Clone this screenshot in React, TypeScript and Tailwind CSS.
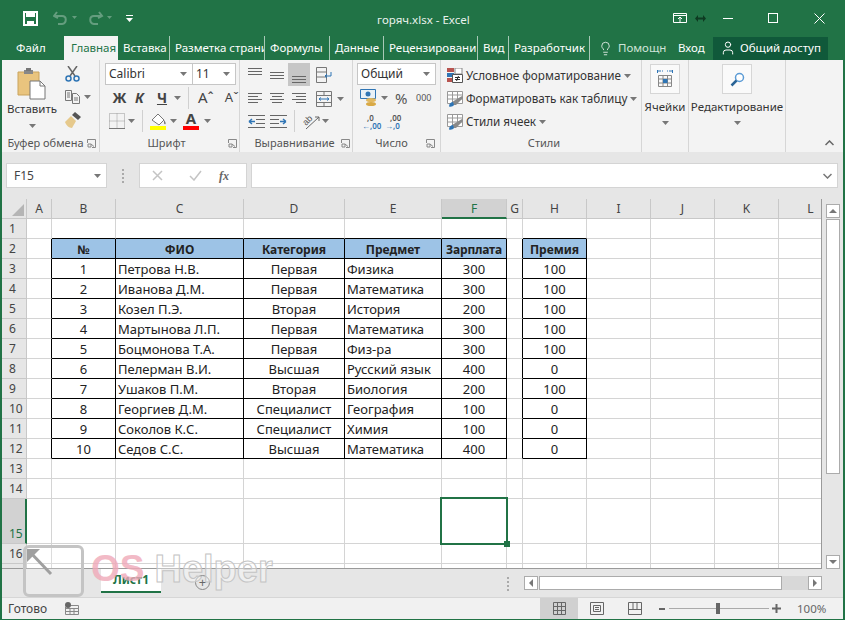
import React from 'react';
import { User, Lightbulb } from 'lucide-react';

const Caret = ({ className = '' }: { className?: string }) => (
  <svg width="7" height="4" viewBox="0 0 7 4" className={`shrink-0 ${className}`}>
    <path d="M0 0h7L3.500 4z" fill="#777" />
  </svg>
);

const Launcher = () => (
  <svg width="9" height="9" viewBox="0 0 9 9" className="shrink-0">
    <path d="M.5 4V.5H8.500V8.500H5M1 5h3v3H1zM4 5l3 2.500" fill="none" stroke="#888" />
  </svg>
);

const Sep = ({ h = 'h-[22px]' }: { h?: string }) => <div className={`w-px bg-[#d0d0d0] shrink-0 ${h}`} />;

// lines used by the alignment buttons
const Lines = ({ ys, xs, color = '#666' }: { ys: number[]; xs: [number, number][]; color?: string }) => (
  <svg width="16" height="16" viewBox="0 0 16 16" className="shrink-0">
    {ys.map((y, i) => (
      <path key={y} d={`M${xs[i % xs.length][0]} ${y + 0.5}H${xs[i % xs.length][1]}`} stroke={color} />
    ))}
  </svg>
);

const PasteIcon = () => (
  <svg width="30" height="32" viewBox="0 0 30 32">
    <path d="M1 4h21v23H1z" fill="#e9c47e" stroke="#c9a35c" />
    <path d="M7 2h9v4H7z" fill="#888" />
    <path d="M9 0h5v3H9z" fill="#777" />
    <path d="M13 13h10l5 5v13H13z" fill="#fff" stroke="#777" />
    <path d="M23 13v5h5" fill="none" stroke="#777" />
  </svg>
);

const CutIcon = () => (
  <svg width="15" height="16" viewBox="0 0 15 16" fill="none">
    <path d="M3 0l7 10M12 0L5 10" stroke="#666" strokeWidth="1.500" />
    <circle cx="3.500" cy="12.500" r="2.500" stroke="#2f75b5" strokeWidth="1.500" />
    <circle cx="11.500" cy="12.500" r="2.500" stroke="#2f75b5" strokeWidth="1.500" />
  </svg>
);

const CopyIcon = () => (
  <svg width="15" height="14" viewBox="0 0 15 14" fill="none" stroke="#777">
    <path d="M.5.500h6v10h-6zM2 3h3M2 5h3M2 7h3" />
    <path d="M7.500 3.500h4l3 3v7h-7z" fill="#f3f3f3" />
    <path d="M9 8h4M9 10h4" />
  </svg>
);

const BrushIcon = () => (
  <svg width="16" height="16" viewBox="0 0 16 16">
    <path d="M0 10l6-6 5 5-4 7c-3 0-6-3-7-6z" fill="#e6c98c" />
    <path d="M7 3l3-3 6 5-3 3z" fill="#555" />
  </svg>
);

const BordersIcon = () => (
  <svg width="16" height="16" viewBox="0 0 16 16" fill="none">
    <path d="M.5.500h15v15H.500z" stroke="#999" strokeDasharray="1 1" />
    <path d="M8 .5v15M.5 8h15" stroke="#999" strokeDasharray="1 1" />
    <path d="M0 15.500h16" stroke="#777" />
  </svg>
);

const FillIcon = () => (
  <svg width="18" height="18" viewBox="0 0 18 18">
    <path d="M2 8l6-6 6 6-5 5z" fill="#fff" stroke="#777" />
    <path d="M14 8c1.500 2 2 3 1.500 4-.7.500-1.500 0-1.500-1z" fill="#777" />
    <path d="M0 14h16v4H0z" fill="#ffff00" />
  </svg>
);

const WrapIcon = () => (
  <svg width="16" height="16" viewBox="0 0 16 16" fill="none" stroke="#777">
    <path d="M.5.500h10v15H.500zM.5 5h10M.5 10h10" />
    <path d="M15 5v4H9M11 7L9 9l2 2" stroke="#2f75b5" />
  </svg>
);

const MergeIcon = () => (
  <svg width="16" height="16" viewBox="0 0 16 16" fill="none" stroke="#777">
    <path d="M.5.500h15v15H.500zM.5 4.500h15M.5 11.500h15M8 .5v4M8 11.500v4" />
    <path d="M3 8h10M3 8l2-1.500M3 8l2 1.500M13 8l-2-1.500M13 8l-2 1.500" stroke="#2f75b5" />
  </svg>
);

const IndentIcon = ({ flip }: { flip?: boolean }) => (
  <svg width="17" height="13" viewBox="0 0 17 13" fill="none" className={flip ? '-scale-x-100' : ''}>
    <path d="M0 .5h17M8 4.500h9M8 8.500h9M0 12.500h17" stroke="#666" />
    <path d="M1 6.500h6M1 6.500l3-2.500M1 6.500L4 9" stroke="#2f75b5" strokeWidth="1.500" />
  </svg>
);

const OrientIcon = () => (
  <svg width="18" height="18" viewBox="0 0 18 18" fill="none">
    <text x="1" y="11" fontSize="9" fill="#555" transform="rotate(-45 6 9)" fontFamily="Liberation Sans, sans-serif">ab</text>
    <path d="M4 17L17 5M17 5h-4M17 5v4" stroke="#666" />
  </svg>
);

const AccountingIcon = () => (
  <svg width="17" height="18" viewBox="0 0 17 18">
    <path d="M.5.500h15v9H.500z" fill="#e9f1f7" stroke="#2f75b5" />
    <circle cx="8" cy="5" r="2.500" fill="#2f75b5" />
    <ellipse cx="11" cy="11" rx="5" ry="2" fill="#e2b85f" />
    <ellipse cx="11" cy="15" rx="5" ry="2" fill="#d9a945" />
  </svg>
);

const CondIcon = () => (
  <svg width="16" height="15" viewBox="0 0 16 15">
    <path d="M0 0h7v4H0z" fill="#b85450" />
    <path d="M0 5h7v4H0z" fill="#2f75b5" />
    <path d="M0 10h7v4H0z" fill="#b85450" />
    <path d="M8 0h7v6H8z" fill="#fff" stroke="#888" />
    <path d="M5.500 6.500h10v8h-10z" fill="#fff" stroke="#555" />
    <path d="M8 9.500h5M8 11.500h5M11.500 8l-2 5" stroke="#333" fill="none" />
  </svg>
);

const TableFmtIcon = () => (
  <svg width="16" height="16" viewBox="0 0 16 16">
    <path d="M.5.500h15v12H.500zM.5 4h15M.5 8h15M5.500.5v12M10.500.5v12" fill="#fff" stroke="#999" />
    <path d="M15 5l1 2-7 7H5v-3z" fill="#8a8a8a" />
    <path d="M2 15.500c0-3 2-4.500 4-4.500l1 3c-1 1.500-3 2-5 1.500z" fill="#2f75b5" />
  </svg>
);

const CellsIcon = () => (
  <svg width="16" height="18" viewBox="0 0 16 18" fill="none">
    <path d="M.5 1H4M12 1h3.500M.5 0v3M15.500 0v3M5 1l1 0M10 1h1" stroke="#2f75b5" />
    <path d="M1.500 5.500h13v11h-13zM1.500 9h13M1.500 13h13M6 5.500v11M10.500 5.500v11" stroke="#888" />
    <path d="M6 9h4.500v4H6z" fill="#2f75b5" />
  </svg>
);

const FindIcon = () => (
  <svg width="15" height="15" viewBox="0 0 15 15" fill="none">
    <circle cx="9.500" cy="5.500" r="4" stroke="#5b9bd5" strokeWidth="1.500" fill="#fff" />
    <path d="M6.500 8.500L1.500 13.500" stroke="#2a6496" strokeWidth="2.500" />
  </svg>
);

const GroupLabel = ({ text, launcher, w }: { text: string; launcher?: boolean; w: string }) => (
  <div className={`mt-auto h-[16px] flex items-center text-[11px] text-[#555] ${w}`}>
    <span className="flex-1 text-center whitespace-nowrap">{text}</span>
    {launcher && <Launcher />}
  </div>
);

const FieldBox = ({ text, className }: { text: string; className: string }) => (
  <div className={`h-[22px] bg-white border border-[#c6c6c6] flex items-center justify-between pl-[3px] pr-[5px] text-[12px] text-[#333] ${className}`}>
    <span>{text}</span>
    <Caret />
  </div>
);

const Ribbon = () => (
  <div className="h-[92px] bg-[#f3f3f3] flex text-[#333]">
    {/* Буфер обмена */}
    <div className="w-[98px] border-r border-[#d6d6d6] flex flex-col pt-[4px] pl-[2px] pr-[3px]">
      <div className="flex">
        <div className="w-[56px] flex flex-col items-center pt-[4px]">
          <PasteIcon />
          <span className="text-[11.5px] leading-[16px] mt-[1px]">Вставить</span>
          <Caret className="mt-[7px]" />
        </div>
        <div className="flex flex-col pl-[5px] gap-[8px] pt-[2px]">
          <CutIcon />
          <div className="flex items-center gap-[4px]"><CopyIcon /><Caret /></div>
          <BrushIcon />
        </div>
      </div>
      <GroupLabel text="Буфер обмена" launcher w="w-full pb-[1px]" />
    </div>

    {/* Шрифт */}
    <div className="w-[140px] border-r border-[#d6d6d6] flex flex-col pt-[3px] pl-[5px]">
      <div className="flex">
        <FieldBox text="Calibri" className="w-[88px]" />
        <FieldBox text="11" className="w-[43px] border-l-0" />
      </div>
      <div className="h-[23px] mt-[1px] flex items-center text-[#444]">
        <span className="ml-[7px] w-[15px] text-[14px] font-bold text-center">Ж</span>
        <span className="ml-[5px] w-[15px] text-[14px] font-bold italic text-center">К</span>
        <span className="ml-[9px] w-[12px] text-[14px] font-bold underline text-center">Ч</span>
        <Caret className="ml-[6px]" />
        <div className="ml-[7px]"><Sep /></div>
        <span className="ml-[9px] text-[15px]">Aˆ</span>
        <span className="ml-[11px] text-[13px]">Aˇ</span>
      </div>
      <div className="h-[24px] flex items-center">
        <div className="ml-[4px]"><BordersIcon /></div>
        <Caret className="ml-[3px]" />
        <div className="ml-[7px]"><Sep /></div>
        <div className="ml-[7px]"><FillIcon /></div>
        <Caret className="ml-[2px]" />
        <div className="ml-[6px] w-[16px] h-[20px] flex flex-col items-center">
          <span className="text-[15px] leading-[15px] font-bold text-[#444]">A</span>
          <div className="w-[16px] h-[4px] bg-[#ff0000]" />
        </div>
        <Caret className="ml-[5px]" />
      </div>
      <GroupLabel text="Шрифт" launcher w="w-[132px] pb-[1px]" />
    </div>

    {/* Выравнивание */}
    <div className="w-[113px] border-r border-[#d6d6d6] flex flex-col pt-[3px] pl-[8px]">
      <div className="h-[23px] flex items-center">
        <Lines ys={[1, 4, 7]} xs={[[0, 14], [0, 14], [0, 14]]} />
        <div className="ml-[6px]"><Lines ys={[5, 8, 11]} xs={[[0, 14], [0, 14], [0, 14]]} /></div>
        <div className="ml-[2px] w-[22px] h-[23px] bg-[#c6c6c6] flex items-center justify-center">
          <Lines ys={[9, 12, 15]} xs={[[1, 15], [1, 15], [1, 15]]} />
        </div>
        <div className="ml-[6px]"><WrapIcon /></div>
      </div>
      <div className="h-[23px] flex items-center mt-[1px]">
        <Lines ys={[2, 5, 8, 11]} xs={[[0, 14], [0, 10], [0, 14], [0, 10]]} />
        <div className="ml-[6px]"><Lines ys={[2, 5, 8, 11]} xs={[[0, 14], [2, 12], [0, 14], [2, 12]]} /></div>
        <div className="ml-[6px]"><Lines ys={[2, 5, 8, 11]} xs={[[0, 14], [4, 14], [0, 14], [4, 14]]} /></div>
        <div className="ml-[8px]"><MergeIcon /></div>
        <Caret className="ml-[5px]" />
      </div>
      <div className="h-[22px] flex items-center">
        <IndentIcon />
        <div className="ml-[5px]"><IndentIcon flip /></div>
        <div className="ml-[7px]"><Sep /></div>
        <div className="ml-[7px]"><OrientIcon /></div>
        <Caret className="ml-[2px]" />
      </div>
      <GroupLabel text="Выравнивание" launcher w="w-[102px] pb-[1px]" />
    </div>

    {/* Число */}
    <div className="w-[88px] border-r border-[#d6d6d6] flex flex-col pt-[3px] pl-[4px]">
      <FieldBox text="Общий" className="w-[79px]" />
      <div className="h-[24px] mt-[1px] flex items-center text-[#555]">
        <div className="ml-[3px]"><AccountingIcon /></div>
        <Caret className="ml-[4px]" />
        <span className="ml-[7px] w-[17px] text-[15px]">%</span>
        <span className="ml-[4px] text-[9px]">000</span>
      </div>
      <div className="h-[23px] flex items-center text-[8px] leading-[8px] text-[#555] font-semibold">
        <div className="ml-[5px] w-[15px]"><span className="block pl-[5px]">,0</span><span className="block text-[#2f75b5] whitespace-nowrap">←,00</span></div>
        <div className="ml-[8px] w-[15px]"><span className="block pl-[5px]">,00</span><span className="block text-[#2f75b5] whitespace-nowrap">→,0</span></div>
      </div>
      <GroupLabel text="Число" launcher w="w-[78px] pb-[1px]" />
    </div>

    {/* Стили */}
    <div className="w-[201px] border-r border-[#d6d6d6] flex flex-col pt-[4px] pl-[6px] text-[11.7px] whitespace-nowrap">
      <div className="h-[23px] flex items-center gap-[3px]"><CondIcon /><span>Условное форматирование</span><Caret /></div>
      <div className="h-[23px] flex items-center gap-[3px]"><TableFmtIcon /><span>Форматировать как таблицу</span><Caret /></div>
      <div className="h-[23px] flex items-center gap-[3px]"><TableFmtIcon /><span>Стили ячеек</span><Caret /></div>
      <GroupLabel text="Стили" w="w-full pb-[1px]" />
    </div>

    {/* Ячейки */}
    <div className="w-[47px] border-r border-[#d6d6d6] flex flex-col items-center pt-[4px] text-[11.5px]">
      <div className="w-[30px] h-[30px] bg-[#fafafa] border border-[#d6d6d6] flex items-center justify-center"><CellsIcon /></div>
      <span className="mt-[4px] leading-[18px]">Ячейки</span>
      <Caret className="mt-[5px]" />
    </div>

    {/* Редактирование */}
    <div className="w-[97px] border-r border-[#d6d6d6] flex flex-col items-center pt-[4px] text-[11.5px]">
      <div className="w-[30px] h-[30px] bg-[#fafafa] border border-[#d6d6d6] flex items-center justify-center">
        <FindIcon />
      </div>
      <span className="mt-[4px] leading-[18px] whitespace-nowrap">Редактирование</span>
      <Caret className="mt-[5px]" />
    </div>

    <div className="flex-1 flex justify-end items-end pr-[9px] pb-[6px]">
      <svg width="9" height="6" viewBox="0 0 9 6" fill="none"><path d="M.5 5l4-4 4 4" stroke="#666" strokeWidth="1.500" /></svg>
    </div>
  </div>
);

const TitleBar = () => (
  <div className="h-[36px] flex items-center text-white relative">
    <div className="ml-[21px] w-[15px] h-[15px]">
      <svg width="15" height="15" viewBox="0 0 15 15" fill="none">
        <path d="M1 1h13v13H1z" stroke="#fff" strokeWidth="2" />
        <path d="M3 1h9v5H3z" fill="#fff" />
        <path d="M4 10h7v4H4z" fill="#fff" />
      </svg>
    </div>
    <svg width="60" height="16" viewBox="0 0 60 16" fill="none" className="ml-[15px] opacity-30">
      <path d="M4 2L1 6l4 2M1 6h8c5 0 5 7 0 8H5" stroke="#fff" strokeWidth="2" />
      <path d="M19 6h5l-2.500 3z" fill="#fff" />
      <path d="M46 2l3 4-4 2M49 6h-8c-5 0-5 7 0 8h4" stroke="#fff" strokeWidth="2" />
      <path d="M54 6h5l-2.500 3z" fill="#fff" />
    </svg>
    <svg width="7" height="7" viewBox="0 0 7 7" className="ml-[13px]"><path d="M0 0h7v1H0zM0 3h7L3.500 7z" fill="#fff" /></svg>
    <span className="absolute left-[375px] top-[11px] text-[11.5px] leading-[18px] text-[#e8f1ec]">горяч.xlsx - Excel</span>
    <div className="ml-auto flex items-center">
      <svg width="15" height="11" viewBox="0 0 15 11" fill="none" stroke="#fff"><path d="M.5.500h13v9H.500zM.5 2.500h13M7 9V4M5 6l2-2 2 2" /></svg>
      <svg width="11" height="7" viewBox="0 0 11 7" className="ml-[7px]"><path d="M0 3.500L3 0v2.500h5V0l3 3.500L8 7V4.500H3V7z" fill="#0e3b22" /></svg>
      <div className="ml-[17px] w-[10px] h-px bg-white" />
      <div className="ml-[35px] w-[10px] h-[10px] border border-white" />
      <svg width="11" height="11" viewBox="0 0 11 11" className="ml-[36px] mr-[18px]"><path d="M.5.500l10 10M10.500.5l-10 10" stroke="#fff" /></svg>
    </div>
  </div>
);

const TabItem = ({ text, w, active, sep = true }: { text: string; w: string; active?: boolean; sep?: boolean }) => (
  <div className={`h-[24px] flex items-center whitespace-nowrap overflow-hidden shrink-0 pl-[5px] text-[11.5px] ${w} ${active ? 'bg-[#f3f3f3] text-[#217346] justify-center pl-0' : 'text-white'} ${sep ? 'border-r border-[#a9c9b7]' : ''}`}>
    {text}
  </div>
);

const TabsRow = () => (
  <div className="h-[24px] flex items-center">
    <span className="ml-[14px] w-[48px] text-[11.5px] text-white">Файл</span>
    <TabItem text="Главная" w="w-[54px]" active sep={false} />
    <TabItem text="Вставка" w="w-[52px]" />
    <TabItem text="Разметка страни" w="w-[95px]" />
    <TabItem text="Формулы" w="w-[65px]" />
    <TabItem text="Данные" w="w-[54px]" />
    <TabItem text="Рецензировани" w="w-[94px]" />
    <TabItem text="Вид" w="w-[31px]" />
    <TabItem text="Разработчик" w="w-[81px]" />
    <Lightbulb size={15} strokeWidth={1.25} className="ml-[8px] text-white" />
    <span className="ml-[5px] w-[49px] text-[11.5px] text-[#cfe3d8]">Помощн</span>
    <span className="ml-[11px] w-[26px] text-[11.5px] text-white">Вход</span>
    <div className="ml-[9px] w-[115px] h-[23px] bg-[#10593a] flex items-center text-[11.5px] whitespace-nowrap text-white">
      <User size={16} strokeWidth={1.5} className="ml-[7px] mr-[4px]" />
      Общий доступ
    </div>
  </div>
);

const FormulaBar = () => (
  <div className="h-[47px] bg-[#e6e6e6] flex items-start pt-[11px] pl-[4px] pr-[5px]">
    <div className="w-[101px] h-[25px] bg-white border border-[#d4d4d4] flex items-center justify-between pl-[7px] pr-[5px] text-[12px] text-[#444]">
      F15
      <Caret />
    </div>
    <div className="w-[32px] h-[25px] flex flex-col items-center justify-center gap-[2px]">
      <div className="w-[2px] h-[2px] bg-[#aaa]" />
      <div className="w-[2px] h-[2px] bg-[#aaa]" />
      <div className="w-[2px] h-[2px] bg-[#aaa]" />
      <div className="w-[2px] h-[2px] bg-[#aaa]" />
    </div>
    <div className="w-[108px] h-[25px] bg-white border border-[#d4d4d4] flex items-center pl-[12px]">
      <svg width="11" height="11" viewBox="0 0 11 11"><path d="M1 1l9 9M10 1l-9 9" stroke="#c4c4c4" strokeWidth="1.500" /></svg>
      <svg width="13" height="11" viewBox="0 0 13 11" className="ml-[26px]"><path d="M1 6l4 4 7-9" fill="none" stroke="#c4c4c4" strokeWidth="1.500" /></svg>
      <span className="ml-[17px] text-[12px] italic font-semibold text-[#666] [font-family:'Liberation_Serif',serif]">fx</span>
    </div>
    <div className="ml-[4px] flex-1 h-[25px] bg-white border border-[#d4d4d4] flex items-center justify-end pr-[5px]">
      <svg width="9" height="6" viewBox="0 0 9 6" fill="none"><path d="M.5 1l4 4 4-4" stroke="#777" strokeWidth="1.500" /></svg>
    </div>
  </div>
);

const COLS = ['A', 'B', 'C', 'D', 'E', 'F', 'G', 'H', 'I', 'J', 'K', 'L'];

const RECORDS = [
  ['1', 'Петрова Н.В.', 'Первая', 'Физика', '300', '100'],
  ['2', 'Иванова Д.М.', 'Первая', 'Математика', '300', '100'],
  ['3', 'Козел П.Э.', 'Вторая', 'История', '200', '100'],
  ['4', 'Мартынова Л.П.', 'Первая', 'Математика', '300', '100'],
  ['5', 'Боцмонова Т.А.', 'Первая', 'Физ-ра', '300', '100'],
  ['6', 'Пелерман В.И.', 'Высшая', 'Русский язык', '400', '0'],
  ['7', 'Ушаков П.М.', 'Вторая', 'Биология', '200', '100'],
  ['8', 'Георгиев Д.М.', 'Специалист', 'География', '100', '0'],
  ['9', 'Соколов К.С.', 'Специалист', 'Химия', '100', '0'],
  ['10', 'Седов С.С.', 'Высшая', 'Математика', '400', '0'],
];

const HEADS = ['№', 'ФИО', 'Категория', 'Предмет', 'Зарплата', '', 'Премия'];

const LIGHT = 'border-r border-b border-[#d4d4d4]';
const DARK = 'border-r border-b border-black';
const ABOVE = 'border-r border-b border-r-[#d4d4d4] border-b-black';
const BESIDE = 'border-r border-b border-r-black border-b-[#d4d4d4]';

const Cell = ({ text = '', cls = LIGHT, align = 'text-center', extra = 'text-[13px]' }: { text?: string; cls?: string; align?: string; extra?: string }) => (
  <div className={`min-w-0 whitespace-nowrap overflow-hidden pt-[2px] leading-[17px] text-[#222] ${cls} ${align} ${extra}`}>{text}</div>
);

const RowHead = ({ n, active }: { n: number; active?: boolean }) => (
  <div className={`flex items-end pl-[7px] text-[12px] leading-[19px] text-[#444] border-b border-[#c8c8c8] ${active ? 'bg-[#d2d2d2] border-r-2 border-r-[#217346] text-[#217346]' : 'bg-[#e6e6e6] border-r border-r-[#c8c8c8]'}`}>{n}</div>
);

const EmptyRow = ({ n, tall }: { n: number; tall?: boolean }) => (
  <>
    <RowHead n={n} active={tall} />
    {COLS.map((c) => (
      c === 'F' && tall ? (
        <div key={c} className="relative -ml-px -mt-px outline-2 -outline-offset-1 outline-[#217346] z-10">
          <div className="absolute -right-[3px] -bottom-[3px] w-[6px] h-[6px] bg-[#217346]" />
        </div>
      ) : (
        <Cell key={c} />
      )
    ))}
  </>
);

const Sheet = () => (
  <div className="flex-1 min-w-0 h-[370px] overflow-hidden border-b border-[#9a9a9a] border-r border-r-[#9a9a9a] bg-white">
    <div className="grid grid-cols-[25px_25px_64px_128px_101px_97px_65px_16px_64px_64px_64px_64px_64px] grid-rows-[20px_20px_20px_repeat(10,20px)_20px_20px_45px_20px_20px]">
      <div className="bg-[#e6e6e6] border-r border-b border-[#c8c8c8] flex items-end justify-end pr-[2px] pb-[2px]">
        <svg width="12" height="12" viewBox="0 0 12 12"><path d="M12 0v12H0z" fill="#b5b5b5" /></svg>
      </div>
      {COLS.map((c) => (
        <div key={c} className={`text-center text-[12px] leading-[19px] ${c === 'F' ? 'bg-[#d2d2d2] text-[#217346] border-b-2 border-b-[#217346]' : 'bg-[#e6e6e6] text-[#444] border-b border-b-[#c8c8c8]'} border-r border-r-[#c8c8c8]`}>{c}</div>
      ))}

      {/* row 1: bottom edge of the table headers */}
      <RowHead n={1} />
      <Cell />
      {COLS.slice(1).map((c) => (
        <Cell key={c} cls={['B', 'C', 'D', 'E', 'F', 'H'].includes(c) ? ABOVE : LIGHT} />
      ))}

      {/* row 2: table headers */}
      <RowHead n={2} />
      <Cell cls={BESIDE} />
      {HEADS.map((h, i) => (
        i === 5 ? (
          <Cell key={i} cls={BESIDE} />
        ) : (
          <Cell key={i} text={h} cls={DARK} extra={`text-[12px] bg-[#9dc3e6] font-bold ${i === 4 ? 'tracking-[-0.2px]' : ''}`} />
        )
      ))}
      {['I', 'J', 'K', 'L'].map((c) => <Cell key={c} />)}

      {RECORDS.map((r, i) => (
        <React.Fragment key={r[0]}>
          <RowHead n={i + 3} />
          <Cell cls={BESIDE} />
          <Cell text={r[0]} cls={DARK} />
          <Cell text={r[1]} cls={DARK} align="text-left pl-[2px]" />
          <Cell text={r[2]} cls={DARK} />
          <Cell text={r[3]} cls={DARK} align="text-left pl-[2px]" />
          <Cell text={r[4]} cls={DARK} />
          <Cell cls={BESIDE} />
          <Cell text={r[5]} cls={DARK} />
          {['I', 'J', 'K', 'L'].map((c) => <Cell key={c} />)}
        </React.Fragment>
      ))}

      <EmptyRow n={13} />
      <EmptyRow n={14} />
      <EmptyRow n={15} tall />
      <EmptyRow n={16} />
      <EmptyRow n={17} />
    </div>
  </div>
);

const ScrollBtn = ({ dir, className = '' }: { dir: 'up' | 'down' | 'left' | 'right'; className?: string }) => (
  <div className={`bg-white border border-[#ababab] flex items-center justify-center shrink-0 ${className}`}>
    <svg width="8" height="8" viewBox="0 0 8 8">
      {dir === 'up' && <path d="M0 6h8L4 2z" fill="#777" />}
      {dir === 'down' && <path d="M0 2h8L4 6z" fill="#777" />}
      {dir === 'left' && <path d="M6 0v8L2 4z" fill="#777" />}
      {dir === 'right' && <path d="M2 0v8l4-4z" fill="#777" />}
    </svg>
  </div>
);

const VScroll = () => (
  <div className="w-[21px] bg-[#e6e6e6] flex flex-col pl-[4px] pr-[3px] pt-[5px]">
    <ScrollBtn dir="up" className="h-[14px]" />
    <div className="h-[255px] bg-white border border-[#ababab] mt-px" />
    <ScrollBtn dir="down" className="h-[14px] mt-auto" />
  </div>
);

const SheetTabs = () => (
  <div className="h-[28px] bg-[#e6e6e6] flex items-start">
    <div className="ml-[99px] w-[60px] h-[24px] bg-white border-b-2 border-[#217346] flex items-center justify-center text-[12px] font-bold text-[#217346]">Лист1</div>
    <div className="ml-[34px] mt-[6px] w-[15px] h-[15px] rounded-full border border-[#888] flex items-center justify-center text-[13px] leading-none text-[#666]">+</div>
    <div className="ml-[297px] mt-[8px] flex flex-col gap-[2px]">
      <div className="w-[2px] h-[2px] bg-[#aaa]" />
      <div className="w-[2px] h-[2px] bg-[#aaa]" />
      <div className="w-[2px] h-[2px] bg-[#aaa]" />
      <div className="w-[2px] h-[2px] bg-[#aaa]" />
    </div>
    <div className="ml-[15px] mt-[7px] w-[298px] h-[14px] flex">
      <ScrollBtn dir="left" className="w-[14px]" />
      <div className="ml-px w-[243px] bg-white border border-[#ababab]" />
      <div className="flex-1 bg-[#d8d8d8]" />
      <ScrollBtn dir="right" className="w-[14px]" />
    </div>
  </div>
);

const StatusBar = () => (
  <div className="h-[22px] bg-[#f1f1f1] border-t border-[#d6d6d6] flex items-center text-[12px] text-[#444]">
    <span className="ml-[6px] w-[57px]">Готово</span>
    <svg width="14" height="13" viewBox="0 0 14 13" fill="none"><path d="M3 3.500h10.500v9H.500V5M.5 6.500h13M.5 9.500h13M5 6.500v6M9 6.500v6" stroke="#888" /><circle cx="3" cy="3" r="3" fill="#666" /></svg>
    <div className="ml-[461px] w-[38px] h-[21px] bg-[#d0d0d0] flex items-center justify-center">
      <svg width="13" height="13" viewBox="0 0 13 13" fill="none"><path d="M.5.500h12v12H.500zM.5 4.500h12M.5 8.500h12M4.500.5v12M8.500.5v12" stroke="#666" /></svg>
    </div>
    <svg width="14" height="13" viewBox="0 0 14 13" fill="none" className="ml-[12px]"><path d="M.5.500h13v12H.500zM3.500 3.500h7v6h-7zM5 5.500h4M5 7.500h4" stroke="#666" /></svg>
    <svg width="14" height="13" viewBox="0 0 14 13" fill="none" className="ml-[24px]"><path d="M.5.500h13v12H.500zM.5 7.500h13M5 .5v7M9 .5v7" stroke="#666" /></svg>
    <div className="ml-[17px] w-[6px] h-[2px] bg-[#666]" />
    <div className="ml-[4px] w-[100px] h-px bg-[#aaa] flex items-center">
      <div className="ml-[47px] w-[4px] h-[11px] bg-[#666]" />
    </div>
    <svg width="9" height="9" viewBox="0 0 9 9" className="ml-[3px]"><path d="M0 3.500h9v2H0zM3.500 0h2v9h-2z" fill="#666" /></svg>
    <span className="ml-[16px] text-[11.5px] text-[#666]">100%</span>
  </div>
);

const Watermark = () => (
  <div className="absolute left-[23px] top-[545px] flex items-start pointer-events-none">
    <div className="w-[61px] h-[52px] rounded-[6px] border-[3px] border-[#c4c4c4] bg-white/20">
      <svg width="36" height="36" viewBox="0 0 36 36" fill="none">
        <path d="M3 3l22 23" stroke="#a0a0a0" strokeWidth="3" />
        <path d="M1 1h13L1 14z" fill="#a0a0a0" />
      </svg>
    </div>
    <span className="ml-[7px] mt-[4px] text-[37px] leading-[40px] font-black text-[#f0a9b9] opacity-80 [font-family:'Liberation_Sans',sans-serif]">OS</span>
    <span className="ml-[10px] mt-[4px] text-[38px] leading-[40px] font-bold text-white/40 [-webkit-text-stroke:1px_#c4c4c4] [font-family:'Liberation_Sans',sans-serif]">Helper</span>
  </div>
);

const App: React.FC = () => {
  return (
    <div className="relative w-[845px] h-[620px] overflow-hidden bg-[#217346] pl-[2px] pr-[2px] pb-px [font-family:'Noto_Sans',sans-serif]">
      <TitleBar />
      <TabsRow />
      <Ribbon />
      <FormulaBar />
      <div className="flex h-[370px]">
        <Sheet />
        <VScroll />
      </div>
      <SheetTabs />
      <StatusBar />
      <Watermark />
    </div>
  );
};

export default App;
